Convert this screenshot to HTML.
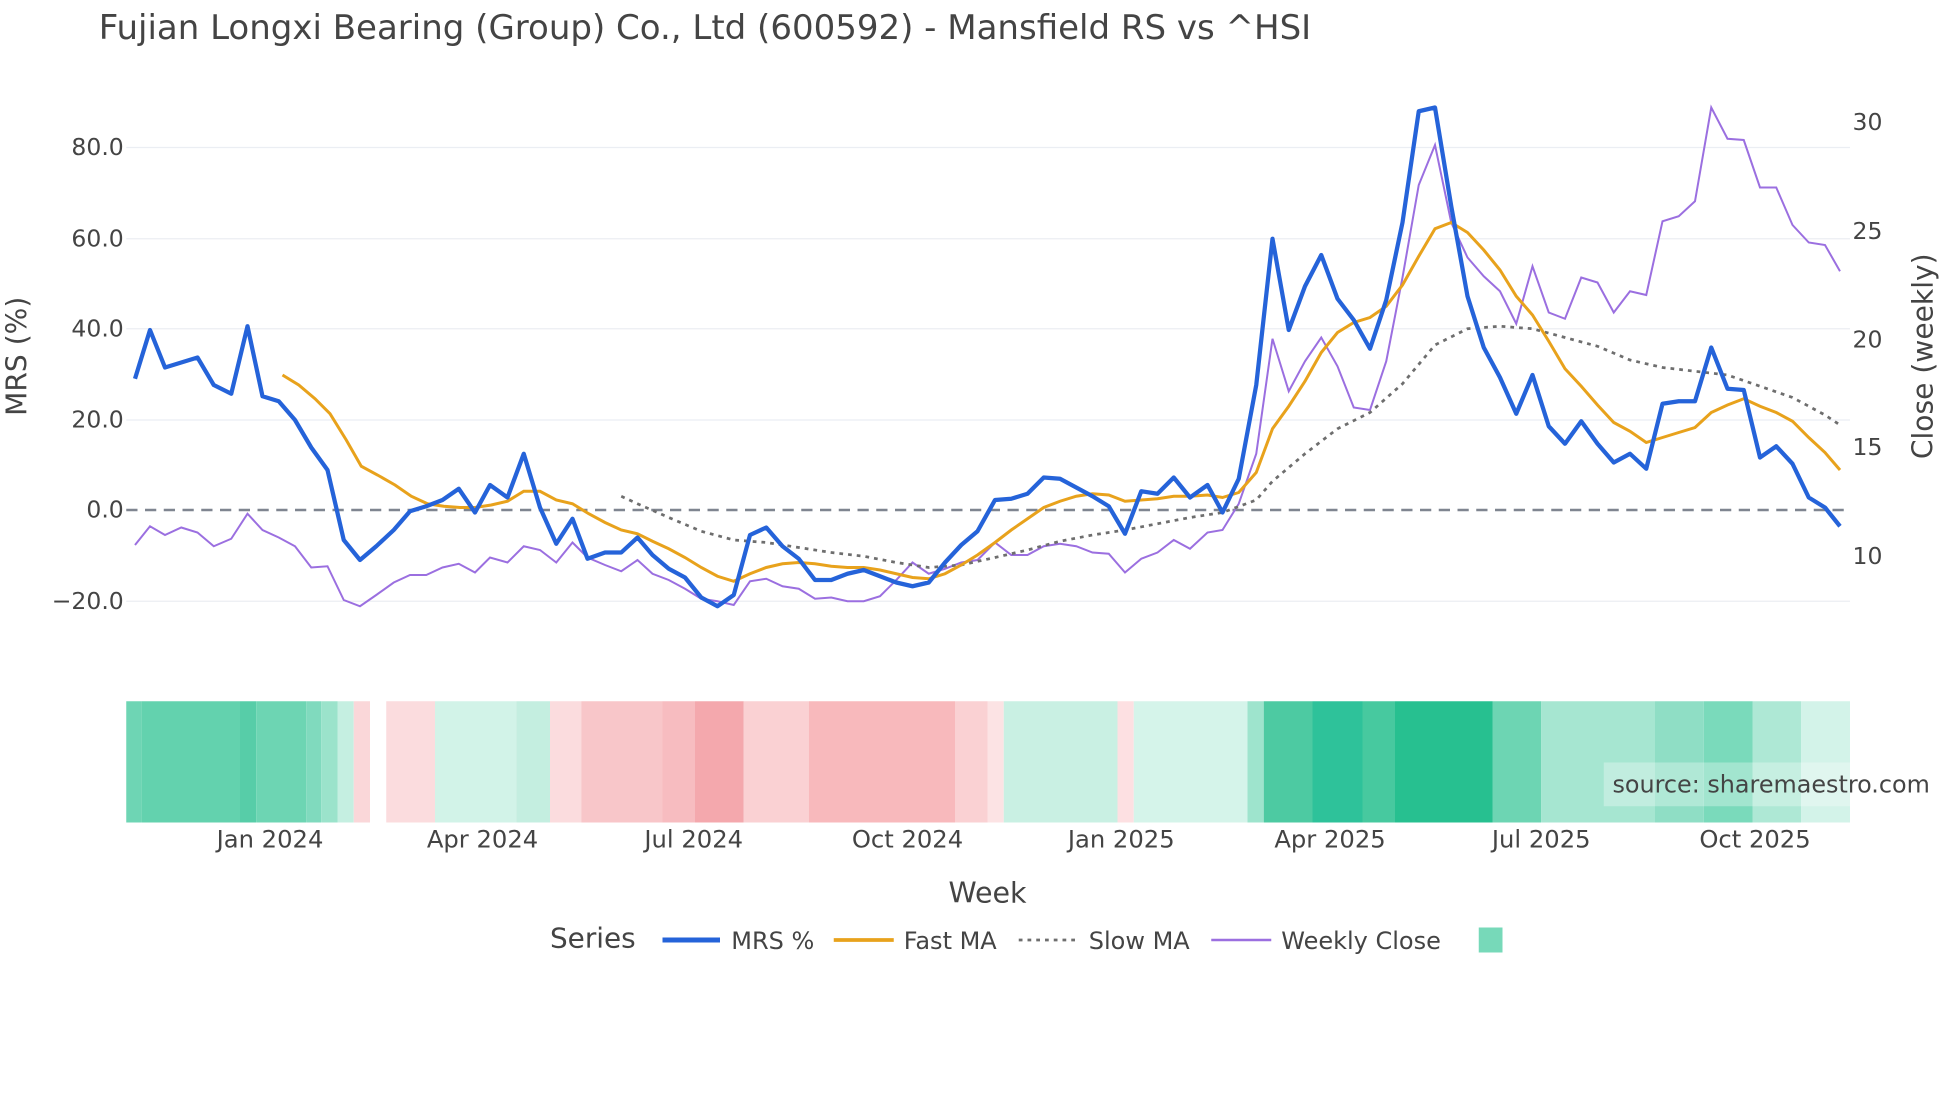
<!DOCTYPE html>
<html><head><meta charset="utf-8"><style>html,body{margin:0;padding:0;background:#fff;width:1960px;height:1102px;overflow:hidden}svg{display:block}text{font-family:"DejaVu Sans","Liberation Sans",sans-serif;fill:#444}</style></head><body>
<svg width="1960" height="1102" viewBox="0 0 1568 881.6" xmlns="http://www.w3.org/2000/svg">
<text x="79" y="31" font-size="27.2" fill="#333">Fujian Longxi Bearing (Group) Co., Ltd (600592) - Mansfield RS vs ^HSI</text>
<g stroke="#ebeef3" stroke-width="1">
<line x1="101" x2="1480" y1="118" y2="118"/><line x1="101" x2="1480" y1="191" y2="191"/><line x1="101" x2="1480" y1="263" y2="263"/><line x1="101" x2="1480" y1="336" y2="336"/><line x1="101" x2="1480" y1="481" y2="481"/>
</g>
<g font-size="18.8" text-anchor="end">
<text x="99" y="124">80.0</text><text x="99" y="197">60.0</text><text x="99" y="269">40.0</text><text x="99" y="342">20.0</text><text x="99" y="414">0.0</text><text x="99" y="487">−20.0</text>
</g>
<g font-size="18.8">
<text x="1482" y="104">30</text><text x="1482" y="191">25</text><text x="1482" y="278">20</text><text x="1482" y="364">15</text><text x="1482" y="451">10</text>
</g>
<text transform="translate(21,285) rotate(-90)" font-size="22.5" text-anchor="middle">MRS (%)</text>
<text transform="translate(1546,285) rotate(-90)" font-size="22.5" text-anchor="middle">Close (weekly)</text>
<line x1="101" x2="1480" y1="408" y2="408" stroke="#7f8590" stroke-width="2" stroke-dasharray="9,6"/>
<polyline fill="none" stroke="#9b6fe0" stroke-width="1.6" points="108,436 120,421 132,428 145,422 158,426 171,437 185,431 198,411 210,424 223,430 236,437 249,454 262,453 275,480 288,485 301,476 315,466 328,460 341,460 354,454 367,451 380,458 392,446 406,450 419,437 432,440 445,450 458,434 470,446 484,452 497,457 510,448 522,459 535,464 548,471 561,479 574,481 587,484 600,465 613,463 626,469 639,471 652,479 665,478 678,481 691,481 704,477 717,464 730,450 743,459 756,455 769,450 782,448 796,434 809,444 822,444 835,437 848,435 861,437 874,442 887,443 900,458 913,447 926,442 939,432 952,439 966,426 978,424 991,403 1005,363 1018,271 1031,313 1044,289 1057,270 1070,293 1083,326 1096,328 1109,289 1122,222 1135,148 1148,116 1161,178 1174,206 1187,221 1200,233 1213,259 1226,213 1239,250 1252,255 1265,222 1278,226 1291,250 1304,233 1317,236 1330,177 1343,173 1356,161 1369,86 1382,111 1395,112 1408,150 1421,150 1434,180 1447,194 1460,196 1472,217"/>
<polyline fill="none" stroke="#6e6e6e" stroke-width="2.2" stroke-dasharray="3,4" points="497,397 510,403 535,414 561,425 587,432 613,434 639,438 665,442 691,445 717,450 743,454 769,452 796,446 822,440 848,433 874,428 900,424 926,419 952,414 978,410 1005,400 1018,385 1044,363 1070,343 1096,330 1122,307 1148,276 1174,263 1200,261 1226,263 1252,270 1278,277 1304,288 1330,294 1356,297 1382,300 1408,309 1434,318 1460,332 1472,340"/>
<polyline fill="none" stroke="#e8a21c" stroke-width="2.4" points="226,300 239,308 252,319 264,331 277,352 289,373 302,380 316,388 329,397 342,403 355,405 368,406 380,406 393,404 406,401 419,393 432,393 445,400 458,403 471,411 484,418 497,424 510,427 522,433 535,439 548,446 561,454 574,461 587,465 600,459 613,454 626,451 639,450 652,451 665,453 678,454 691,454 704,456 717,459 730,462 743,463 756,459 769,452 782,444 796,434 809,424 822,415 835,406 848,401 861,397 874,395 887,396 900,401 913,400 926,399 939,397 952,397 966,396 978,398 991,394 1005,378 1018,343 1031,325 1044,305 1057,282 1070,266 1083,258 1096,254 1109,245 1122,228 1135,205 1148,183 1161,178 1174,186 1187,200 1200,216 1213,237 1226,252 1239,273 1252,295 1265,309 1278,324 1291,338 1304,345 1317,354 1330,350 1343,346 1356,342 1369,330 1382,324 1395,319 1408,325 1421,330 1434,337 1447,350 1460,362 1472,376"/>
<polyline fill="none" stroke="#2563d9" stroke-width="3.4" stroke-linejoin="round" points="108,303 120,264 132,294 145,290 158,286 171,308 185,315 198,261 210,317 223,321 236,336 249,358 262,376 275,432 288,448 301,437 315,424 328,409 341,405 354,400 367,391 380,410 392,388 406,398 419,363 432,406 445,435 458,415 470,447 484,442 497,442 510,430 522,444 535,455 548,462 561,478 574,485 587,476 600,428 613,422 626,437 639,447 652,464 665,464 678,459 691,456 704,461 717,466 730,469 743,466 756,450 769,436 782,425 796,400 809,399 822,395 835,382 848,383 861,390 874,397 887,405 900,427 913,393 926,395 939,382 952,398 966,388 978,410 991,383 1005,308 1018,191 1031,264 1044,229 1057,204 1070,239 1083,256 1096,279 1109,240 1122,178 1135,89 1148,86 1161,165 1174,237 1187,278 1200,302 1213,331 1226,300 1239,341 1252,355 1265,337 1278,355 1291,370 1304,363 1317,375 1330,323 1343,321 1356,321 1369,278 1382,311 1395,312 1408,366 1421,357 1434,371 1447,398 1460,406 1472,421"/>
<g>
<rect x="101" y="561" width="12" height="97" fill="#6ed5b4"/>
<rect x="113" y="561" width="79" height="97" fill="#63d2ae"/>
<rect x="192" y="561" width="13" height="97" fill="#57cda8"/>
<rect x="205" y="561" width="40" height="97" fill="#6dd5b3"/>
<rect x="245" y="561" width="12" height="97" fill="#80dabe"/>
<rect x="257" y="561" width="13" height="97" fill="#9be3cb"/>
<rect x="270" y="561" width="13" height="97" fill="#c5efe1"/>
<rect x="283" y="561" width="13" height="97" fill="#fad7d9"/>
<rect x="309" y="561" width="39" height="97" fill="#fbdcde"/>
<rect x="348" y="561" width="65" height="97" fill="#d2f3e8"/>
<rect x="413" y="561" width="27" height="97" fill="#c4eee0"/>
<rect x="440" y="561" width="25" height="97" fill="#fbdcde"/>
<rect x="465" y="561" width="65" height="97" fill="#f8c6c9"/>
<rect x="530" y="561" width="26" height="97" fill="#f7bcc0"/>
<rect x="556" y="561" width="39" height="97" fill="#f4a8ad"/>
<rect x="595" y="561" width="52" height="97" fill="#fad1d3"/>
<rect x="647" y="561" width="117" height="97" fill="#f8b9bc"/>
<rect x="764" y="561" width="26" height="97" fill="#fad1d3"/>
<rect x="790" y="561" width="13" height="97" fill="#fce3e4"/>
<rect x="803" y="561" width="91" height="97" fill="#c9f0e3"/>
<rect x="894" y="561" width="13" height="97" fill="#fde0e2"/>
<rect x="907" y="561" width="91" height="97" fill="#d5f4ea"/>
<rect x="998" y="561" width="13" height="97" fill="#9ee4cd"/>
<rect x="1011" y="561" width="39" height="97" fill="#4dcaa2"/>
<rect x="1050" y="561" width="40" height="97" fill="#2ec29a"/>
<rect x="1090" y="561" width="26" height="97" fill="#47c99f"/>
<rect x="1116" y="561" width="78" height="97" fill="#27c090"/>
<rect x="1194" y="561" width="39" height="97" fill="#6dd5b3"/>
<rect x="1233" y="561" width="91" height="97" fill="#a6e6d1"/>
<rect x="1324" y="561" width="39" height="97" fill="#8fdec5"/>
<rect x="1363" y="561" width="39" height="97" fill="#7adabb"/>
<rect x="1402" y="561" width="39" height="97" fill="#aee8d5"/>
<rect x="1441" y="561" width="39" height="97" fill="#d3f3e9"/>
</g>
<rect x="1283" y="610" width="197" height="35" fill="#fff" fill-opacity="0.3"/>
<text x="1290" y="634" font-size="19.1" fill="#777">source: sharemaestro.com</text>
<g font-size="19.4" text-anchor="middle">
<text x="216" y="678">Jan 2024</text><text x="386" y="678">Apr 2024</text><text x="555" y="678">Jul 2024</text><text x="726" y="678">Oct 2024</text><text x="897" y="678">Jan 2025</text><text x="1064" y="678">Apr 2025</text><text x="1233" y="678">Jul 2025</text><text x="1404" y="678">Oct 2025</text>
</g>
<text x="790" y="722" font-size="22.8" text-anchor="middle">Week</text>
<text x="440" y="758" font-size="22.3">Series</text>
<line x1="530" x2="576" y1="752" y2="752" stroke="#2563d9" stroke-width="4"/>
<text x="585" y="759" font-size="19.2">MRS %</text>
<line x1="667" x2="715" y1="752" y2="752" stroke="#e8a21c" stroke-width="3"/>
<text x="723" y="759" font-size="19.2">Fast MA</text>
<line x1="815" x2="861" y1="752" y2="752" stroke="#6e6e6e" stroke-width="2.2" stroke-dasharray="3,4"/>
<text x="871" y="759" font-size="19.2">Slow MA</text>
<line x1="969" x2="1017" y1="752" y2="752" stroke="#9b6fe0" stroke-width="2"/>
<text x="1025" y="759" font-size="19.2">Weekly Close</text>
<rect x="1183" y="742" width="19" height="20" fill="#77d9b9"/>
</svg>
</body></html>
